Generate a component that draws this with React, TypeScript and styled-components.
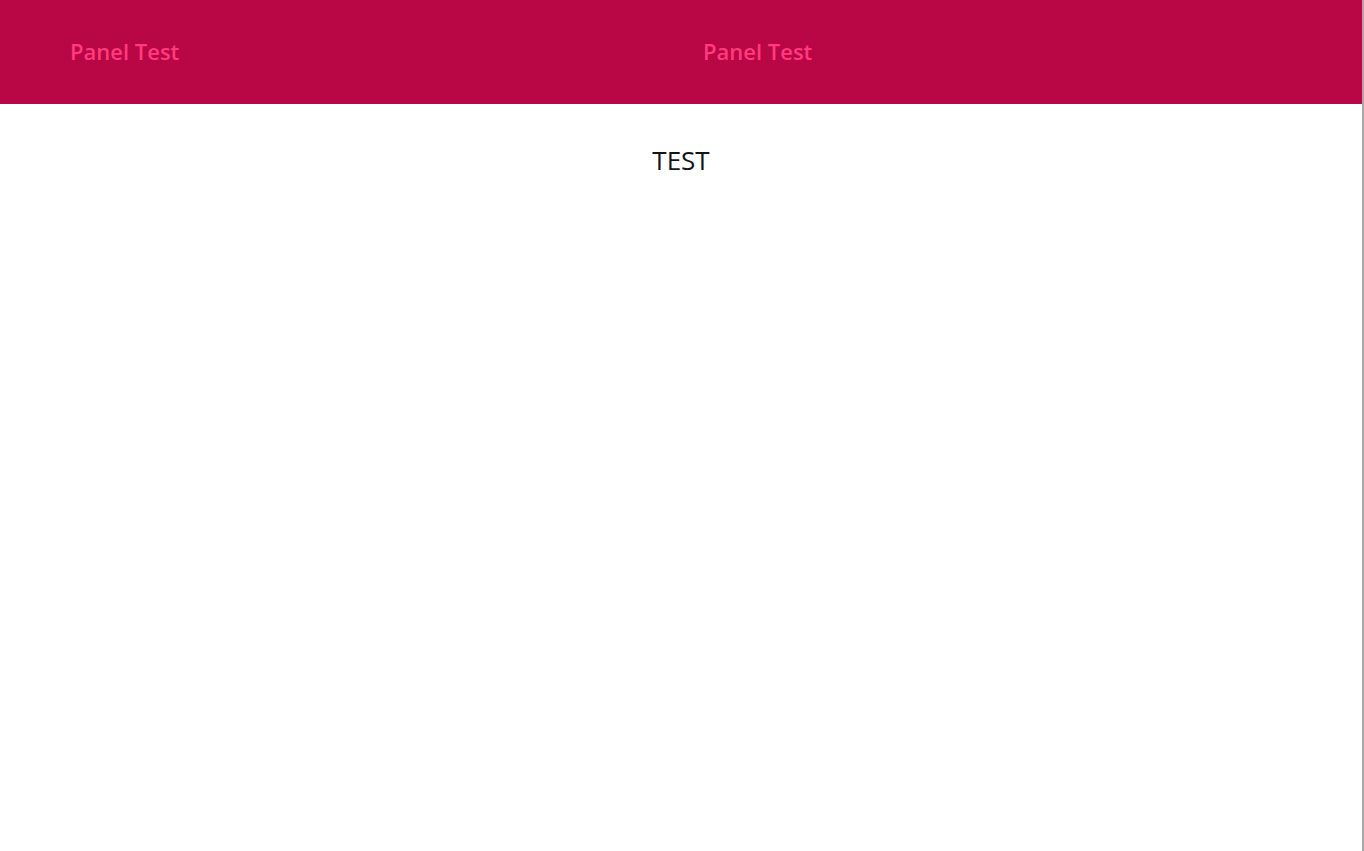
import React from "react";
import styled, { createGlobalStyle } from "styled-components";

const GlobalStyle = createGlobalStyle`
  html, body {
    margin: 0;
    padding: 0;
    background: #ffffff;
    font-family: "Open Sans", "Noto Sans", "Liberation Sans", sans-serif;
  }
`;

const Page = styled.div`
  display: flex;
  min-height: 851px;
`;

const Main = styled.div`
  flex: 1;
  display: flex;
  flex-direction: column;
`;

const Edge = styled.div`
  width: 2px;
  background: #a8a8a8;
`;

const Header = styled.header`
  display: grid;
  grid-template-columns: 1fr 1fr;
  height: 104px;
  background: #b90645;
`;

const Panel = styled.div<{ $inset: number }>`
  display: flex;
  align-items: center;
  padding-left: ${({ $inset }) => $inset}px;
  padding-bottom: 2px;
`;

const PanelTitle = styled.h2`
  margin: 0;
  font-size: 22px;
  font-weight: 600;
  color: #ff3b7d;
`;

const Body = styled.main`
  display: flex;
  justify-content: center;
  padding-top: 38px;
`;

const Heading = styled.div`
  font-size: 26px;
  color: #111418;
  line-height: 36px;
`;

export default function App() {
  return (
    <>
      <GlobalStyle />
      <Page>
        <Main>
          <Header>
            <Panel $inset={70}>
              <PanelTitle>Panel Test</PanelTitle>
            </Panel>
            <Panel $inset={22}>
              <PanelTitle>Panel Test</PanelTitle>
            </Panel>
          </Header>
          <Body>
            <Heading>TEST</Heading>
          </Body>
        </Main>
        <Edge />
      </Page>
    </>
  );
}
